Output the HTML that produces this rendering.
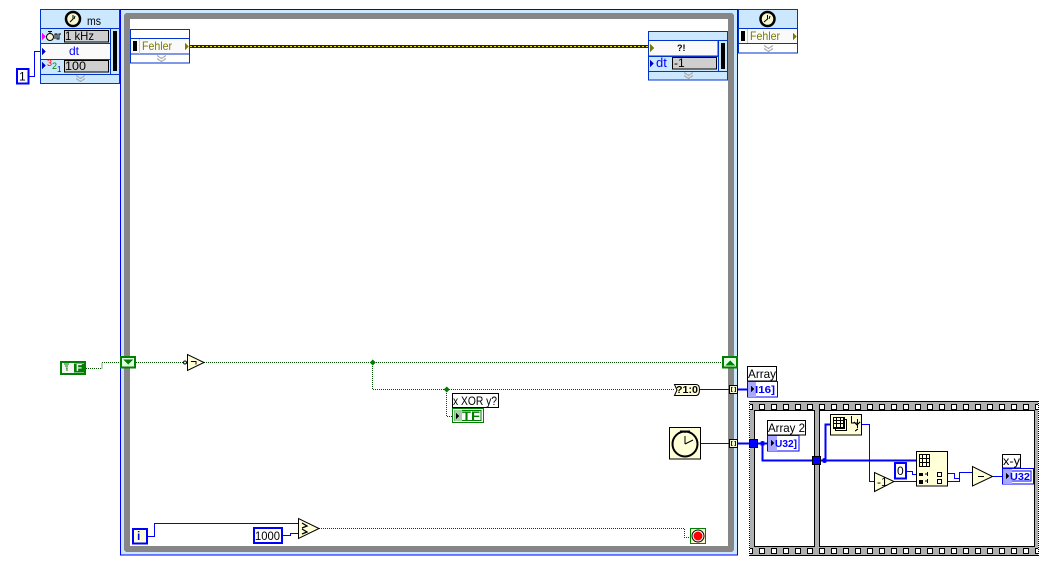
<!DOCTYPE html>
<html><head><meta charset="utf-8"><style>
html,body{margin:0;padding:0;background:#fff;width:1052px;height:570px;overflow:hidden}
svg{display:block}
text{font-family:"Liberation Sans",sans-serif;font-size:12px;fill:#000}
.c{shape-rendering:crispEdges}
.b{fill:none;stroke:#0000ff;stroke-width:1}
.B{fill:none;stroke:#0000ff;stroke-width:2}
.g{fill:none;stroke:#005000;stroke-width:1;stroke-dasharray:1 1}
.l{fill:#cce8ff;stroke:#0033cc}
.w{fill:#fafafa;stroke:#0033cc}
.f{fill:#cfcfcf;stroke:#000}
.y{fill:#ffffd8;stroke:#000}
.v{fill:none;stroke:#a8a8a8}
</style></head><body>
<svg width="1052" height="570" viewBox="0 0 1052 570" xmlns="http://www.w3.org/2000/svg">
<defs>
<pattern id="h" x="759" y="0" width="12" height="570" patternUnits="userSpaceOnUse">
<rect x="0.5" y="404.500" width="5" height="5" fill="#fff" stroke="#000" shape-rendering="crispEdges"/>
<rect x="0.5" y="548.500" width="5" height="5" fill="#fff" stroke="#000" shape-rendering="crispEdges"/>
</pattern>
</defs>
<g class="c">
<!-- timed loop -->
<rect x="120.500" y="9.500" width="617" height="545.500" fill="#cce8ff" stroke="#0000ff"/>
<rect x="124" y="13" width="610" height="539" rx="3" fill="#868686"/>
<rect x="130" y="19" width="598" height="527" fill="#fff"/>
<!-- left node -->
<rect x="40.500" y="9.500" width="79" height="74" class="l"/>
<rect x="40.500" y="28.500" width="70" height="45.500" class="w"/>
<rect x="40.500" y="28.500" width="70" height="15" class="l"/>
<rect x="40.500" y="59.500" width="70" height="15" class="l"/>
<path d="M40.500 28.500H119.500M40.500 74.500H119.500M110.500 28.500V74" stroke="#0033cc" fill="none"/>
<rect x="113" y="31" width="4" height="40" fill="#000"/>
<rect x="64.500" y="30.500" width="44" height="11.500" class="f"/>
<rect x="64.500" y="60.500" width="44" height="11.500" class="f"/>
<path d="M42 33v7l4-3.500z" fill="#ff00ff"/>
<path d="M42 48v7l4-3.500z" fill="#0000c0"/>
<path d="M42 62v7l4-3.500z" fill="#0000c0"/>
<path d="M76 75.500l4.500 3 4.500-3M76 78.500l4.500 3 4.500-3" class="v"/>
<!-- Left inner node -->
<rect x="130.500" y="29.500" width="59" height="33.500" fill="#fff" stroke="#0033cc"/>
<rect x="130.500" y="38.500" width="59" height="15.500" class="w"/>
<rect x="133" y="41" width="4" height="10" fill="#000"/>
<path d="M139.500 39V54" stroke="#c8c8c8"/>
<path d="M185 43v7l4-3.500z" fill="#7a7a00"/>
<path d="M157 55.500l4.500 3 4.500-3M157 58.500l4.500 3 4.500-3" class="v"/>
<!-- right inner node -->
<rect x="648.500" y="31.500" width="79" height="48.500" class="l"/>
<rect x="648.500" y="40.500" width="69.500" height="15.500" class="w"/>
<path d="M648.500 71.500H727.500M718.500 40V71M648.500 40.500H727.500M648.500 56.500H718" stroke="#0033cc" fill="none"/>
<rect x="721" y="43" width="4" height="26" fill="#000"/>
<rect x="672.500" y="57.500" width="44" height="11.500" class="f"/>
<path d="M650 44v8l4-4z" fill="#7a7a00"/>
<path d="M650 60v7l4-3.500z" fill="#0000c0"/>
<path d="M684 72.500l4.500 3 4.500-3M684 75.500l4.500 3 4.500-3" class="v"/>
<!-- right outer node -->
<rect x="738.500" y="9.500" width="59" height="43.500" fill="#fff" stroke="#0033cc"/>
<rect x="738.500" y="9.500" width="59" height="19" class="l"/>
<rect x="738.500" y="28.500" width="59" height="15" class="w"/>
<rect x="741" y="31" width="4" height="10" fill="#000"/>
<path d="M747.500 29V43" stroke="#c8c8c8"/>
<path d="M793 33v7l4-3.500z" fill="#7a7a00"/>
<path d="M764 45.500l4.500 3 4.500-3M764 48.500l4.500 3 4.500-3" class="v"/>
<!-- constant 1 -->
<rect x="17" y="69" width="11.500" height="14.500" fill="#fff" stroke="#0000ff" stroke-width="2"/>
<!-- error wire -->
<rect x="190" y="45" width="458" height="3" fill="#2a2a00"/>
<path d="M190 46.500H648" stroke="#f0e000" stroke-dasharray="2 2" fill="none"/>
<!-- left wires -->
<path d="M29.500 76.500H34.500V51.500H40" class="b"/>
<!-- bool const -->
<rect x="61" y="362" width="24" height="12" fill="#f4f4f4" stroke="#007f00" stroke-width="2"/>
<rect x="74" y="363.500" width="10" height="9" fill="#007f00"/>
<path d="M64 364h5M65 366h3M66 368h1v3" stroke="#007f00" fill="none"/>
<!-- green wires -->
<path d="M86 368.500H102V362.500H120M136 362.500H186M204 362.500H722M372.500 362V389.500H674M446.500 389V416.500H452" class="g"/>
<path d="M319 528.500H684.500V537.500H690" class="g"/>
<!-- shift registers -->
<rect x="121" y="357" width="14" height="10.500" fill="#e0ffe0" stroke="#007f00" stroke-width="2"/>
<path d="M123 359.500h10l-5 5z" fill="#007f00"/>
<rect x="723" y="357" width="14" height="10.500" fill="#e0ffe0" stroke="#007f00" stroke-width="2"/>
<path d="M725 365.500h10l-5-5z" fill="#007f00"/>
<!-- junctions -->
<path d="M372.500 359.500l3 3-3 3-3-3z" fill="#007f00"/>
<path d="M446.500 386.500l3 3-3 3-3-3z" fill="#007f00"/>
<!-- film strip sequence -->
<rect x="749.500" y="401.500" width="289" height="154" fill="#b0b0b0" stroke="#000"/>
<path d="M749.500 402V555M1038.500 402V555" stroke="#fff" stroke-dasharray="1 1" fill="none"/>
<rect x="754.500" y="410.500" width="60" height="136" fill="#fff" stroke="#000"/>
<rect x="819.500" y="410.500" width="215" height="136" fill="#fff" stroke="#000"/>
<rect x="750" y="402" width="288" height="153" fill="url(#h)"/>
<!-- blue wires -->
<path d="M699 389.500H729M701 443.500H729" class="b"/>
<path d="M737 389.500H747M737 443.500H749" class="B"/>
<path d="M758 443.500H767M762.500 443V460.500H812M821 460.500H916M825.500 460V424.500H830" class="B"/>
<path d="M862 424.500H869.500V481.500H874M894 481.500H916M907 471.500H912.500V474.500H916M948 481.500H959.500V472.500H972M948 473.500H954.500V478.500H959M993 476.500H1003" class="b"/>
<path d="M148 536.500H154.500V523.500H298M283 535.500H290.500V533.500H298" class="b"/>
<!-- tunnels -->
<rect x="729.500" y="385.500" width="8" height="8" fill="#f4f4d0" stroke="#000"/>
<path d="M732.500 387.500h-1v4h1M734.500 387.500h1v4h-1" stroke="#0000ff" fill="none"/>
<rect x="729.500" y="439.500" width="8" height="8" fill="#f4f4d0" stroke="#000"/>
<path d="M732.500 441.500h-1v4h1M734.500 441.500h1v4h-1" stroke="#0000ff" fill="none"/>
<rect x="749.500" y="439.500" width="8" height="8" fill="#0000ff" stroke="#000"/>
<rect x="812.500" y="456.500" width="8" height="8" fill="#0000ff" stroke="#000"/>
<circle cx="762.500" cy="443.500" r="2.500" fill="#0000ff"/>
<circle cx="824.500" cy="460.500" r="2.500" fill="#0000ff"/>
<!-- labels -->
<rect x="452.500" y="393.500" width="46" height="14" fill="#fff" stroke="#000"/>
<rect x="747.500" y="366.500" width="29" height="14.500" fill="#fff" stroke="#000"/>
<rect x="767.500" y="420.500" width="38" height="14.500" fill="#fff" stroke="#000"/>
<rect x="1002.500" y="454.500" width="18" height="13.500" fill="#fff" stroke="#000"/>
<!-- indicators -->
<rect x="452.500" y="408.500" width="31" height="14" fill="#fff" stroke="#007f00"/>
<rect x="455" y="410.500" width="26" height="10" fill="#fff" stroke="#007f00"/>
<rect x="455" y="410" width="7" height="11" fill="#a8d0a8"/>
<path d="M456 413v6l3-3z" fill="#000"/>
<rect x="747.500" y="381.500" width="30" height="15.500" fill="#fff" stroke="#0000ff"/>
<rect x="748" y="382" width="8" height="15" fill="#a8a8ff"/>
<path d="M751 386v6l3-3z" fill="#000"/>
<rect x="767.500" y="435.500" width="31.500" height="15.500" fill="#fff" stroke="#0000ff"/>
<rect x="768" y="436" width="9" height="15" fill="#a8a8ff"/>
<path d="M771 440v6l3-3z" fill="#000"/>
<rect x="1002.500" y="468.500" width="31" height="15.500" fill="#fff" stroke="#0000ff"/>
<rect x="1005" y="471" width="26" height="10" fill="none" stroke="#0000ff"/>
<rect x="1003" y="469" width="9" height="15" fill="#a8a8ff"/>
<path d="M1006 473v6l3-3z" fill="#000"/>
<!-- const / i -->
<rect x="133" y="529" width="14" height="14.500" fill="#ffffd8" stroke="#0000ff" stroke-width="2"/>
<rect x="254" y="528" width="28" height="15" fill="#fff" stroke="#0000ff" stroke-width="2"/>
<rect x="895" y="463" width="11" height="15.500" fill="#fff" stroke="#0000ff" stroke-width="2"/>
<!-- stop -->
<rect x="690.500" y="528.500" width="15" height="15" fill="#f8f8d0" stroke="#007f00"/>
<!-- nodes -->
<rect x="830.500" y="414.500" width="31" height="20.500" class="y"/>
<path d="M837.500 421.500h11v11h-11zM835.500 419.500h11v11h-11z" fill="#fff" stroke="#000" transform="translate(-2,-2)"/>
<path d="M833.500 417.500h10v10h-10zM833.500 420.500h10M833.500 423.500h10M836.500 417.500v10M840.500 417.500v10" fill="#ffffd8" stroke="#000"/>
<path d="M851.500 416v7h6M857.500 419v9M854 422l3 3 3-3M855 431l3-2" fill="none" stroke="#000"/>
<rect x="916.500" y="451.500" width="31" height="34.500" class="y"/>
<path d="M919.500 454.500h10v12h-10zM919.500 458.500h10M919.500 462.500h10M922.500 454.500v12M926.500 454.500v12" fill="#ffffd8" stroke="#000"/>
<rect x="919" y="473" width="4" height="3" fill="#000"/>
<rect x="919" y="480" width="4" height="4" fill="#000"/>
<path d="M925 474h2M927.500 472v4M925 481h2M927.500 479v4" stroke="#000" fill="none"/>
<rect x="937.500" y="472.500" width="4" height="4" fill="#fff" stroke="#000"/>
<rect x="937.500" y="479.500" width="4" height="4" fill="#fff" stroke="#000"/>
</g>
<!-- triangles -->
<path d="M187.500 354.500V370.500L204 362.500Z" class="y"/>
<circle cx="185" cy="362.500" r="1.500" fill="#fff" stroke="#000"/>
<path d="M191 361.500h5v3" fill="none" stroke="#000"/>
<path d="M298.500 518.500V538.500L319 528.500Z" class="y"/>
<path d="M302 523l5 3-5 2M302 529l5 3-5 2" fill="none" stroke="#000" stroke-width="1.300"/>
<path d="M874.500 472.500V491.500L894 481.500Z" class="y"/>
<path d="M972.500 466.500V486L992.500 476.500Z" class="y"/>
<path d="M978 476.500h6" stroke="#000"/>
<path d="M674.500 384.500H696Q699.500 384.500 699.500 389.500Q699.500 395.500 696 395.500H674.500L677 390Z" class="y"/>
<!-- clock icons -->
<g fill="#f8f8d0" stroke="#000" stroke-width="2.500">
<circle cx="73" cy="19" r="7"/><circle cx="767.500" cy="19" r="7"/>
</g>
<path d="M73 15V19L70 22M75 16L74 19M767.500 15V19L764 22M770 16L769 19" stroke="#000" fill="none"/>
<circle cx="50" cy="37" r="3.500" fill="#f8f8d0" stroke="#000"/>
<path d="M48 31.500h4M50 32v2M55 39v-5h2v5h2v-5h2" fill="none" stroke="#000"/>
<rect x="669.500" y="427.500" width="31" height="31.500" fill="#ffffd8" stroke="#000"/>
<circle cx="685" cy="444" r="12.500" fill="#ffffd8" stroke="#000" stroke-width="2"/>
<path d="M680 431h10M685 431v2M685 444V436M685 444L693 440" stroke="#000" fill="none"/>
<circle cx="698" cy="536" r="6" fill="#fff" stroke="#000"/>
<circle cx="698" cy="536" r="4.500" fill="#f00"/>
<!-- text -->
<text x="87" y="25" textLength="14" lengthAdjust="spacingAndGlyphs">ms</text>
<text x="65" y="40" textLength="29" lengthAdjust="spacingAndGlyphs">1 kHz</text>
<text x="69" y="55" style="fill:#0000ff;font-size:12px">dt</text>
<text x="47" y="66" style="fill:#ff0000;font-size:9px">3</text><text x="52" y="69" style="fill:#007f00;font-size:9px">2</text><text x="57" y="72" style="fill:#0000ff;font-size:8px">1</text>
<text x="65" y="70" textLength="21" lengthAdjust="spacingAndGlyphs">100</text>
<text x="19" y="80.500">1</text>
<text x="142" y="50" style="fill:#7a7a00" textLength="30" lengthAdjust="spacingAndGlyphs">Fehler</text>
<text x="750" y="40" style="fill:#7a7a00" textLength="30" lengthAdjust="spacingAndGlyphs">Fehler</text>
<text x="677" y="51" style="font-size:9px;font-weight:bold">?!</text>
<text x="656" y="67" style="fill:#0000ff;font-size:13px">dt</text>
<text x="674" y="67">-1</text>
<text x="76" y="371" style="fill:#fff;font-size:10px;font-weight:bold">F</text>
<text x="453" y="405" textLength="44" lengthAdjust="spacingAndGlyphs">x XOR y?</text>
<text x="462" y="420" style="fill:#007f00;font-size:12px;font-weight:bold" textLength="18" lengthAdjust="spacingAndGlyphs">TF</text>
<text x="676" y="393" style="font-size:10px;font-weight:bold" textLength="22" lengthAdjust="spacingAndGlyphs">?1:0</text>
<text x="748" y="378" textLength="28" lengthAdjust="spacingAndGlyphs">Array</text>
<text x="755" y="393" style="fill:#0000ff;font-size:10px;font-weight:bold" textLength="20" lengthAdjust="spacingAndGlyphs">I16]</text>
<text x="768" y="432" textLength="37" lengthAdjust="spacingAndGlyphs">Array 2</text>
<text x="775" y="447" style="fill:#0000ff;font-size:10px;font-weight:bold" textLength="22" lengthAdjust="spacingAndGlyphs">U32]</text>
<text x="1003" y="465" textLength="17" lengthAdjust="spacingAndGlyphs">x-y</text>
<text x="1010" y="480" style="fill:#0000ff;font-size:10px;font-weight:bold" textLength="20" lengthAdjust="spacingAndGlyphs">U32</text>
<text x="137" y="540" style="fill:#0000ff;font-weight:bold">i</text>
<text x="255" y="540" textLength="25" lengthAdjust="spacingAndGlyphs">1000</text>
<text x="897" y="475">0</text>
<text x="877" y="486" style="font-size:12px">-1</text>
</svg>
</body></html>
